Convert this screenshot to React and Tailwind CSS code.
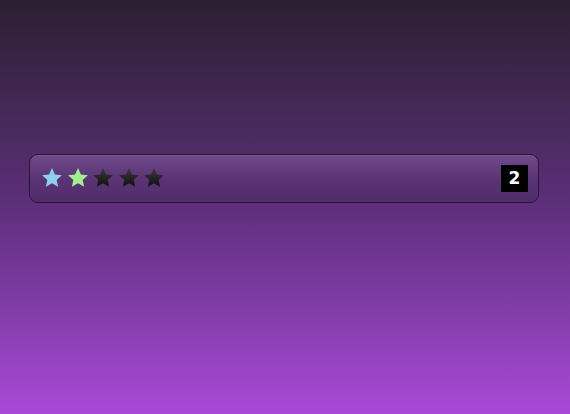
import React from "react";

const STAR = "M12 1.2l3.2 7 7.6.8-5.7 5.1 1.6 7.5L12 17.8l-6.7 3.8 1.6-7.5L1.2 9l7.6-.8z";

const Star = ({ fill, id, dark }) => (
  <svg width="22" height="22" viewBox="0 0 24 24">
    {dark && (
      <defs>
        <linearGradient id={id} x1="0" y1="0" x2="0" y2="1">
          <stop offset="0" stopColor="#3a3a3a" />
          <stop offset="1" stopColor="#101010" />
        </linearGradient>
      </defs>
    )}
    <path d={STAR} fill={dark ? `url(#${id})` : fill} />
  </svg>
);

const App = () => {
  const stars = [
    { fill: "#8ecfee" },
    { fill: "#a3ef8c" },
    { dark: true },
    { dark: true },
    { dark: true },
  ];

  return (
    <div className="h-[414px] w-full bg-gradient-to-b from-[#2b1f31] via-[#5e2f7c] to-[#a94ad8] pt-[154px] px-[29px]">
      <div className="h-[49px] w-[510px] rounded-[9px] border border-[#2a1537] bg-gradient-to-b from-[#704a8a] via-[#5a3474] to-[#512c6b] flex items-center pl-[11px] pr-[10px] shadow-[inset_0_1px_0_rgba(255,255,255,0.08)]">
        <div className="flex items-center gap-[3.6px] mb-[2px]">
          {stars.map((s, i) => (
            <Star key={i} id={"g" + i} fill={s.fill} dark={s.dark} />
          ))}
        </div>
        <div className="ml-auto w-[27px] h-[27px] bg-black flex items-center justify-center text-white font-bold text-[17px] font-['DejaVu_Sans',sans-serif]">
          2
        </div>
      </div>
    </div>
  );
};

export default App;
